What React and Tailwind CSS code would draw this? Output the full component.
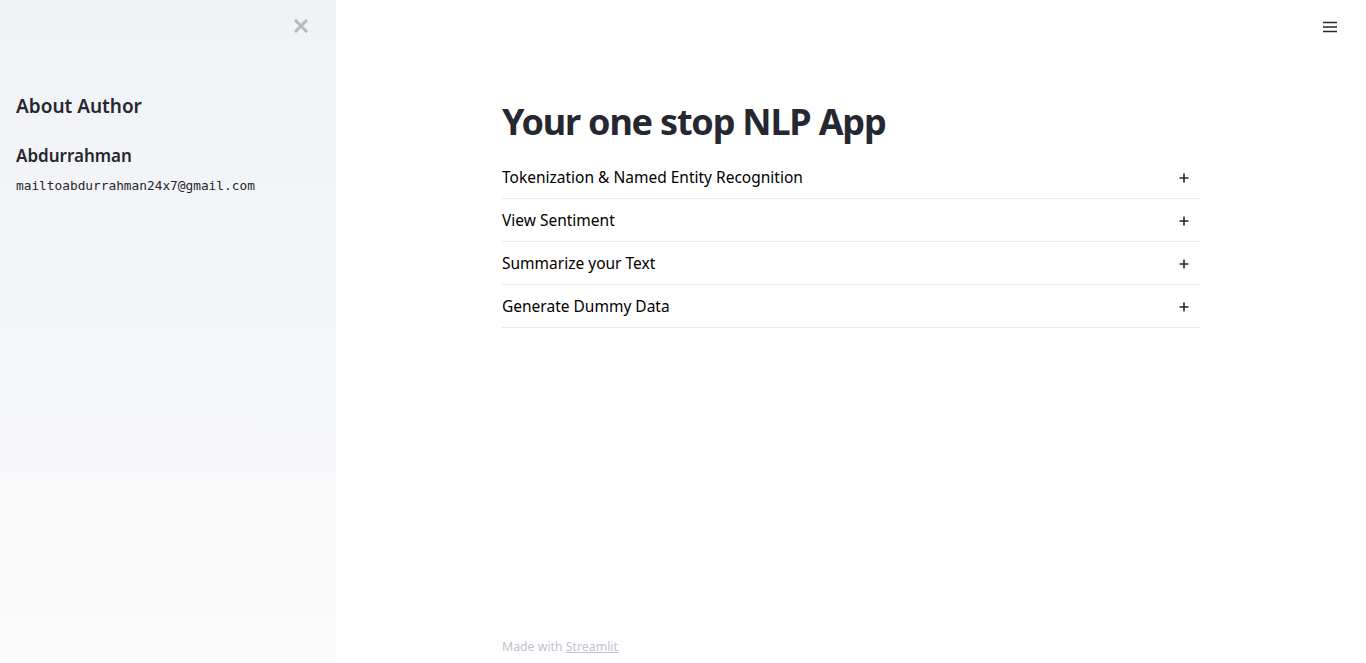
import React from "react";

const rows = [
  "Tokenization & Named Entity Recognition",
  "View Sentiment",
  "Summarize your Text",
  "Generate Dummy Data",
];

function Plus() {
  return (
    <svg width="10" height="10" viewBox="0 0 10 10" className="shrink-0">
      <path d="M5 0.5v9M0.5 5h9" stroke="#262730" strokeWidth="1.6" />
    </svg>
  );
}

export default function App() {
  return (
    <div
      className="flex h-[663px] w-full overflow-hidden bg-white text-[#262730]"
      style={{ fontFamily: '"Noto Sans", "Open Sans", sans-serif' }}
    >
      <aside className="flex w-[336px] shrink-0 flex-col bg-gradient-to-b from-[#f0f2f6] to-[#fafafa] px-4">
        <div className="flex h-[52px] items-center justify-end pr-[12px]">
          <svg width="14" height="14" viewBox="0 0 14 14">
            <path d="M2 2L12 12M12 2L2 12" stroke="#b5b8bf" strokeWidth="3" strokeLinecap="square" />
          </svg>
        </div>
        <h2 className="mt-[41px] text-[19px] font-semibold leading-[26px]">About Author</h2>
        <h3 className="mt-[25px] text-[17px] font-semibold leading-[24px]">Abdurrahman</h3>
        <p
          className="mt-[10px] text-[12.8px] leading-[16px]"
          style={{ fontFamily: '"DejaVu Sans Mono", "Liberation Mono", monospace' }}
        >
          mailtoabdurrahman24x7@gmail.com
        </p>
      </aside>
      <main className="flex flex-1 flex-col">
        <div className="flex h-[54px] items-center justify-end pr-[29px]">
          <svg width="14" height="12" viewBox="0 0 14 12">
            <path d="M0 1.5h14M0 6h14M0 10.5h14" stroke="#262730" strokeWidth="1.6" />
          </svg>
        </div>
        <div className="mx-auto flex w-[698px] flex-1 flex-col">
          <h1 className="mt-[46px] text-[36px] font-bold leading-[44px] tracking-[-1.2px]">
            Your one stop NLP App
          </h1>
          <div className="mt-[12px]">
            {rows.map((r) => (
              <div
                key={r}
                className="flex h-[43px] items-center justify-between border-b border-[#e6eaf1] pr-[11px] pt-[2px] text-[15.5px] text-black"
              >
                <span>{r}</span>
                <Plus />
              </div>
            ))}
          </div>
          <div className="mt-auto pb-[7px] text-[12.3px] text-[#c0c4d0]">
            Made with <span className="underline">Streamlit</span>
          </div>
        </div>
      </main>
    </div>
  );
}
